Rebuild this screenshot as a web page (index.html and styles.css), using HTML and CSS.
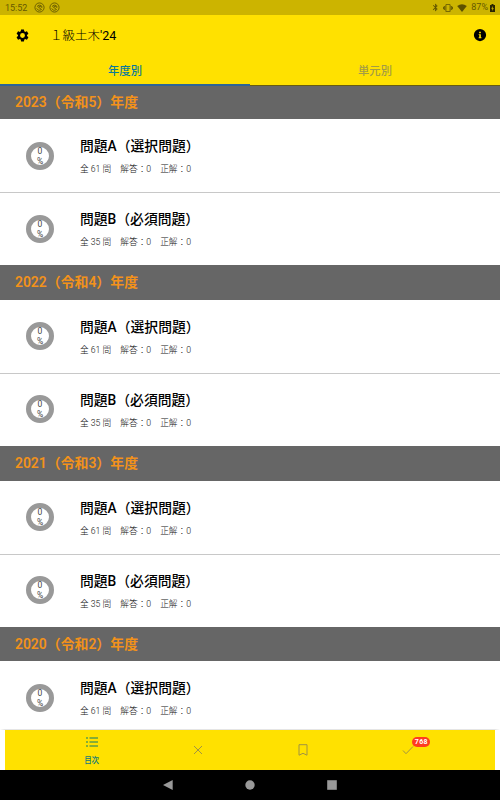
FILE: index.html
```html
<!DOCTYPE html>
<html lang="ja">
<head>
    <meta charset="UTF-8">
    <meta name="viewport" content="width=device-width, initial-scale=1.0">
    <title>１級土木'24</title>
    <link rel="stylesheet" href="styles.css">
</head>
<body>
    <div class="status-bar">
        <span class="clock">15:52</span>
        <svg class="notice" viewBox="0 0 24 24"><circle cx="12" cy="12" r="10"/><path d="M6 14a6 6 0 0 0 9 3M8 8q5-3 9 1v4M7 9l10 8M11 10h4"/></svg>
        <svg class="notice" viewBox="0 0 24 24"><circle cx="12" cy="12" r="10"/><path d="M6 14a6 6 0 0 0 9 3M8 8q5-3 9 1v4M7 9l10 8M11 10h4"/></svg>
        <div class="status-right">
            <svg class="bluetooth" viewBox="0 0 24 24"><path d="M17.71 7.71L12 2h-1v7.59L6.41 5 5 6.41 10.59 12 5 17.59 6.41 19 11 14.41V22h1l5.71-5.71-4.3-4.29 4.3-4.29zM13 5.83l1.88 1.88L13 9.59V5.83zm1.88 10.46L13 18.17v-3.76l1.88 1.88z"/></svg>
            <svg class="vibrate" viewBox="0 0 24 24"><path d="M0 15h2V9H0v6zm3 2h2V7H3v10zm19-8v6h2V9h-2zm-3 8h2V7h-2v10zM16.500 3h-9C6.670 3 6 3.670 6 4.500v15c0 .83.67 1.500 1.500 1.500h9c.83 0 1.500-.67 1.500-1.500v-15c0-.83-.67-1.500-1.500-1.500zM16 19H8V5h8v14z"/></svg>
            <svg class="wifi" viewBox="0 0 24 20"><path d="M12 20L0 5q12-9 24 0z"/></svg>
            <span>87%</span>
            <svg class="battery" viewBox="0 0 10 16"><path fill-rule="evenodd" d="M3 0h4v2h3v14H0V2h3zM5.500 4L2.500 9.500h2V14l3-6h-2z"/></svg>
        </div>
    </div>

    <header class="app-bar">
        <svg class="gear" viewBox="0 0 24 24"><path d="M19.140 12.940c.04-.3.060-.61.060-.94s-.02-.64-.07-.94l2.030-1.580c.18-.14.23-.41.12-.61l-1.920-3.320c-.12-.22-.37-.29-.59-.22l-2.390.96c-.5-.38-1.030-.7-1.620-.94L14.400 2.810c-.04-.24-.24-.41-.48-.41h-3.840c-.24 0-.43.17-.47.41L9.250 5.350c-.59.24-1.130.57-1.620.94l-2.390-.96c-.22-.08-.47 0-.59.22L2.740 8.870c-.12.21-.08.47.12.61l2.030 1.580c-.05.3-.09.63-.09.94s.02.64.07.94l-2.030 1.580c-.18.14-.23.41-.12.61l1.920 3.320c.12.22.37.29.59.22l2.390-.96c.5.38 1.030.7 1.620.94l.36 2.540c.05.24.24.41.48.41h3.840c.24 0 .44-.17.47-.41l.36-2.540c.59-.24 1.130-.56 1.620-.94l2.390.96c.22.08.47 0 .59-.22l1.920-3.320c.12-.22.07-.47-.12-.61zM12 15.900a3.900 3.900 0 1 1 0-7.800 3.900 3.900 0 0 1 0 7.800z"/></svg>
        <h1>１級土木<span>'24</span></h1>
        <svg class="info" viewBox="0 0 24 24"><path d="M12 1.500a10.500 10.500 0 1 0 0 21 10.500 10.500 0 0 0 0-21zm2.500 16H9.700V16h1v-4h-1v-1.500h3.800V16h1zM10.500 6.300h3V9h-3z"/></svg>
    </header>

    <nav class="tabs">
        <a class="tab active">年度別</a>
        <a class="tab">単元別</a>
    </nav>

    <main id="list"></main>

    <nav class="bottom-nav">
        <a class="nav-item active">
            <svg class="list-icon" viewBox="0 0 12 10"><path d="M0 1h2M3.500 1H12M0 5h2M3.500 5H12M0 9h2M3.500 9H12"/></svg>
            <span>目次</span>
        </a>
        <a class="nav-item">
            <svg class="cross-icon" viewBox="0 0 10 10"><path d="M1 1l8 8M9 1L1 9"/></svg>
        </a>
        <a class="nav-item">
            <svg class="mark-icon" viewBox="0 0 10 12"><path d="M1 .7h8v10.500L5 9.300 1 11.200z"/></svg>
        </a>
        <a class="nav-item">
            <span class="check-wrap">
                <svg class="check-icon" viewBox="0 0 12 10"><path d="M1 5.500L4 8.700 11 1.500"/></svg>
                <span class="badge">768</span>
            </span>
        </a>
    </nav>

    <div class="system-nav">
        <svg viewBox="0 0 10 10"><path d="M0 5L9.700 0v10z"/></svg>
        <svg viewBox="0 0 10 10"><circle cx="5" cy="5" r="4.700"/></svg>
        <svg viewBox="0 0 10 10"><path d="M.2.200h9.600v9.600H.2z"/></svg>
    </div>

    <script>
        const paperA = { name: "問題A（選択問題）", total: 61 };
        const paperB = { name: "問題B（必須問題）", total: 35 };

        // 年度ごとの問題
        const years = [
            { title: "2023（令和5）年度", papers: [paperA, paperB] },
            { title: "2022（令和4）年度", papers: [paperA, paperB] },
            { title: "2021（令和3）年度", papers: [paperA, paperB] },
            { title: "2020（令和2）年度", papers: [paperA] }
        ];

        document.getElementById("list").innerHTML = years.map(year => `
            <section>
                <h2>${year.title}</h2>
                ${year.papers.map(paper => `
                <div class="row">
                    <div class="ring"><span>0</span><span>%</span></div>
                    <div class="text">
                        <h3>${paper.name}</h3>
                        <p><span>全 ${paper.total} 問</span><span>解答：0</span><span>正解：0</span></p>
                    </div>
                </div>`).join("")}
            </section>`).join("");
    </script>
</body>
</html>
```
FILE: styles.css
```css
* {
    box-sizing: border-box;
}

body {
    font-family: Roboto, "Noto Sans CJK JP", sans-serif;
    margin: 0;
    height: 800px;
    display: flex;
    flex-direction: column;
    overflow: hidden;
    background: #fff;
    color: #000;
}

h1, h2, h3, p {
    margin: 0;
}

.status-bar {
    flex: none;
    height: 15px;
    padding: 0 5px;
    display: flex;
    align-items: center;
    background: #ccb400;
    color: #665a00;
    font-size: 9px;
    line-height: 15px;
}

.status-bar svg {
    fill: #5c5100;
}

.clock {
    width: 29px;
    padding-top: 1px;
}

.status-bar .notice {
    width: 11px;
    height: 11px;
    margin-right: 4px;
    fill: none;
    stroke: #665a00;
    stroke-width: 2;
}

.status-right {
    margin-left: auto;
    display: flex;
    align-items: center;
}

.bluetooth {
    width: 9px;
    height: 9px;
    margin-right: 3px;
}

.vibrate {
    width: 10px;
    height: 10px;
    margin-right: 4px;
}

.wifi {
    width: 10px;
    height: 8px;
    margin-right: 4px;
}

.status-bar .battery {
    width: 5px;
    height: 8px;
    margin-left: 2px;
    fill: #2b2600;
}

.app-bar {
    flex: none;
    height: 40px;
    padding: 0 13px 0 15px;
    display: flex;
    align-items: center;
    background: #ffe100;
}

.gear {
    width: 15px;
    height: 15px;
}

.app-bar h1 {
    margin-left: 20px;
    padding-top: 2px;
    font-size: 12.5px;
    font-weight: 300;
    line-height: 20px;
}

.app-bar h1 span {
    font-weight: 400;
}

.info {
    width: 14px;
    height: 14px;
    margin-left: auto;
}

.tabs {
    position: relative;
    flex: none;
    height: 31px;
    display: flex;
    background: #ffe100;
}

.tab {
    flex: 1;
    border-bottom: 1px solid #665c12;
    color: #a39c45;
    font-size: 11.3px;
    font-weight: 500;
    line-height: 33px;
    text-align: center;
}

.tab.active {
    border-bottom: 2px solid #2c6496;
    color: #0b7a9c;
}

/* the first heading starts just under the tab line */
main {
    flex: 1;
    min-height: 0;
    margin-top: -1.5px;
    overflow: hidden;
}

h2 {
    height: 34.7px;
    padding-left: 15px;
    background: #666;
    color: #f3921a;
    font-size: 13.9px;
    font-weight: 600;
    line-height: 35.4px;
}

.row {
    height: 73px;
    padding-left: 26px;
    display: flex;
    align-items: center;
}

.row + .row {
    box-shadow: inset 0 1px #c8c8c8;
}

.ring {
    width: 28px;
    height: 28px;
    border: 5px solid #999;
    border-radius: 50%;
    display: flex;
    flex-direction: column;
    align-items: center;
    justify-content: center;
    font-size: 8.5px;
    line-height: 10px;
    color: #444;
}

.text {
    margin-left: 26px;
    padding-top: 2px;
}

h3 {
    font-size: 13.8px;
    font-weight: 500;
    line-height: 22px;
}

.text p {
    margin-top: 3px;
    display: flex;
    gap: 9px;
    color: #111;
    font-size: 8.7px;
    font-weight: 300;
    line-height: 18px;
}

.bottom-nav {
    flex: none;
    height: 41px;
    padding: 0 34px;
    border: solid #fff;
    border-width: 0 5px;
    border-top: 1px solid #e5e5e5;
    display: flex;
    background: #ffe100;
}

.nav-item {
    flex: 1;
    display: flex;
    flex-direction: column;
    align-items: center;
    justify-content: center;
    color: #0f7a7c;
    font-size: 7.5px;
    font-weight: 500;
    line-height: 12px;
}

.nav-item.active {
    padding-right: 1px;
}

.nav-item svg {
    fill: none;
    stroke: #a09343;
    stroke-width: 1;
}

.nav-item .list-icon {
    width: 12px;
    height: 10px;
    margin-top: 4px;
    margin-bottom: 8px;
    stroke: #0f7a6c;
    stroke-width: 1.2;
}

.cross-icon {
    width: 10px;
    height: 10px;
}

.mark-icon {
    width: 10px;
    height: 12px;
}

.check-wrap {
    position: relative;
    display: flex;
}

.check-icon {
    width: 12px;
    height: 10px;
}

.badge {
    position: absolute;
    left: 10px;
    top: -8px;
    width: 18px;
    height: 10px;
    border-radius: 5px;
    background: #ff3b20;
    color: #fff;
    font-size: 7px;
    font-weight: 700;
    line-height: 10px;
    letter-spacing: 0.4px;
    text-align: center;
}

.system-nav {
    flex: none;
    height: 30px;
    padding-right: 1px;
    display: flex;
    align-items: center;
    justify-content: center;
    gap: 72px;
    background: #000;
}

.system-nav svg {
    width: 10px;
    height: 10px;
    fill: #999;
}
```
